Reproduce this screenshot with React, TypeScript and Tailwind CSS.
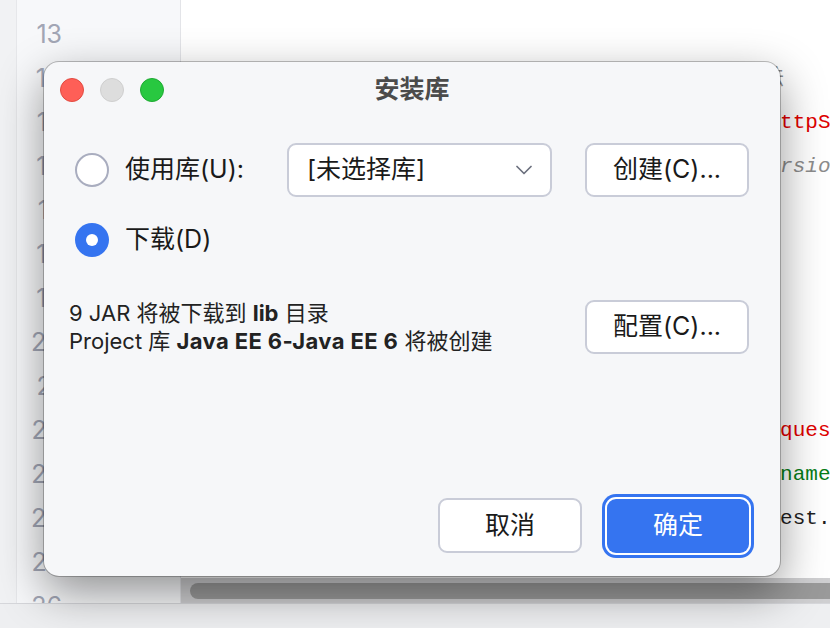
import React from 'react'

const UI_FONT = { fontFamily: 'Inter, "Noto Sans CJK SC", sans-serif' }
const MONO_FONT = { fontFamily: '"Liberation Mono", "Noto Sans CJK SC", monospace' }

const LINE_NUMBERS = [12, 13, 14, 15, 16, 17, 18, 19, 20, 21, 22, 23, 24, 25, 26]

function CodeLine({ children }: { children?: React.ReactNode }) {
  return <div className="h-[44px] shrink-0 flex items-center whitespace-pre text-[21px]">{children}</div>
}

function Editor() {
  return (
    <div className="flex flex-col w-[830px] h-[628px] bg-white">
      <div className="flex flex-1 min-h-0">
        {/* gutter */}
        <div className="flex w-[181px] shrink-0 bg-[#f7f8fa] border-r border-[#e3e4e8] overflow-hidden">
          <div className="w-[17px] shrink-0 bg-[#f1f2f4] border-r border-[#e6e7ea]" />
          <div className="flex flex-col -mt-[31px] w-[45px] items-end">
            {LINE_NUMBERS.map((n) => (
              <div key={n} className="h-[44px] shrink-0 flex items-center text-[25px] text-[#a2a6b5]" style={UI_FONT}>
                {n}
              </div>
            ))}
          </div>
        </div>
        {/* code + scrollbar */}
        <div className="flex flex-col flex-1 min-w-0">
          <div className="flex-1 min-h-0 overflow-hidden pl-[32px]" style={MONO_FONT}>
            <div className="-mt-[31px]">
              <CodeLine>
                <span className="text-[#0033b3]">public</span>
                <span className="text-[#1f1f1f]">{' '.repeat(39)})</span>
              </CodeLine>
              <CodeLine />
              <CodeLine>
                <span className="text-[#8c8c8c]">{' '.repeat(39)}// 方法</span>
              </CodeLine>
              <CodeLine>
                <span className="text-[#0033b3]">{' '.repeat(10)}public class </span>
                <span className="text-[#1f1f1f]">HelloServlet </span>
                <span className="text-[#0033b3]">extends </span>
                <span className="text-[#e00000]">HttpServlet</span>
                <span className="text-[#1f1f1f]"> {'{'}</span>
              </CodeLine>
              <CodeLine>
                <span className="text-[#8c8c8c] italic">{' '.repeat(40)}// version 1.0</span>
              </CodeLine>
              <CodeLine />
              <CodeLine />
              <CodeLine />
              <CodeLine />
              <CodeLine />
              <CodeLine>
                <span className="text-[#0033b3]">{' '.repeat(14)}public void </span>
                <span className="text-[#1f1f1f]">doGet(</span>
                <span className="text-[#e00000]">HttpServletRequest req</span>
              </CodeLine>
              <CodeLine>
                <span className="text-[#1f1f1f]">{' '.repeat(12)}String s = request.getParameter(</span>
                <span className="text-[#067d17]">"name"</span>
                <span className="text-[#1f1f1f]">);</span>
              </CodeLine>
              <CodeLine>
                <span className="text-[#1f1f1f]">{' '.repeat(26)}String value = request.getSession();</span>
              </CodeLine>
            </div>
          </div>
          <div className="h-[25px] shrink-0 bg-[#cfcfd1] flex items-center pl-[9px]">
            <div className="h-[16px] flex-1 rounded-l-full bg-[#9a9a9a]" />
          </div>
        </div>
      </div>
      <div className="h-[25px] shrink-0 bg-[#eeeff1] border-t border-[#d6d7db]" />
    </div>
  )
}

function Radio({ checked }: { checked?: boolean }) {
  if (checked) {
    return (
      <div className="w-[34px] h-[34px] rounded-full bg-[#3574f0] flex items-center justify-center shrink-0">
        <div className="w-[12px] h-[12px] rounded-full bg-white" />
      </div>
    )
  }
  return <div className="w-[34px] h-[34px] rounded-full bg-white border-2 border-[#a9adbf] shrink-0" />
}

function Button({ children, className = '' }: { children: React.ReactNode; className?: string }) {
  return (
    <button
      className={`h-[54px] rounded-[9px] bg-white border-2 border-[#c9ccd8] text-[25px] text-[#1a1a1a] flex items-center justify-center ${className}`}
    >
      {children}
    </button>
  )
}

function Dialog() {
  return (
    <div
      className="absolute left-[44px] top-[62px] w-[736px] h-[514px] rounded-[15px] bg-[#f6f7f9] flex flex-col shadow-[0_0_0_1px_rgba(0,0,0,0.24),0_16px_46px_rgba(0,0,0,0.42)]"
      style={UI_FONT}
    >
      {/* title bar */}
      <div className="h-[56px] grid grid-cols-[1fr_auto_1fr] items-center shrink-0">
        <div className="flex items-center gap-[16px] pl-[16px]">
          <div className="w-[24px] h-[24px] rounded-full bg-[#fe5f57] border border-[#e24b41]" />
          <div className="w-[24px] h-[24px] rounded-full bg-[#dddddd] border border-[#cfcfcf]" />
          <div className="w-[24px] h-[24px] rounded-full bg-[#28c840] border border-[#1eaa32]" />
        </div>
        <div className="text-[25px] font-semibold text-[#4b4b4b]">安装库</div>
        <div />
      </div>

      {/* use library row */}
      <div className="mt-[25px] flex items-center pl-[31px]">
        <div className="w-[212px] flex items-center gap-[16px] shrink-0">
          <Radio />
          <span className="text-[25px] text-[#1a1a1a]">使用库(U):</span>
        </div>
        <div className="w-[265px] h-[54px] rounded-[9px] bg-white border-2 border-[#c9ccd8] flex items-center justify-between pl-[18px] pr-[18px]">
          <span className="text-[25px] text-[#1a1a1a]">[未选择库]</span>
          <svg width="16" height="10" viewBox="0 0 16 10" fill="none">
            <polyline points="1,1.5 8,8.5 15,1.5" stroke="#6c707e" strokeWidth="1.7" strokeLinecap="round" strokeLinejoin="round" />
          </svg>
        </div>
        <Button className="ml-[33px] w-[164px]">创建(C)...</Button>
      </div>

      {/* download row */}
      <div className="mt-[24px] flex items-center gap-[16px] pl-[31px]">
        <Radio checked />
        <span className="text-[25px] text-[#1a1a1a]">下载(D)</span>
      </div>

      {/* info row */}
      <div className="mt-[40px] flex items-center justify-between pl-[25px] pr-[31px]">
        <div className="text-[22px] leading-[28px] text-[#222222]">
          <div>
            9 JAR 将被下载到 <b className="font-bold">lib</b> 目录
          </div>
          <div>
            Project 库 <b className="font-bold tracking-[0.4px]">Java EE 6-Java EE 6</b> 将被创建
          </div>
        </div>
        <Button className="w-[164px]">配置(C)...</Button>
      </div>

      {/* footer */}
      <div className="mt-auto mb-[23px] flex items-center justify-end gap-[25px] pr-[31px]">
        <Button className="w-[144px] h-[55px]">取消</Button>
        <button className="w-[142px] h-[54px] rounded-[9px] bg-[#3574f0] text-[25px] text-white flex items-center justify-center shadow-[0_0_0_2px_#ffffff,0_0_0_5px_#3574f0]">
          确定
        </button>
      </div>
    </div>
  )
}

export default function App() {
  return (
    <div className="relative w-[830px] h-[628px] overflow-hidden">
      <Editor />
      <Dialog />
    </div>
  )
}
